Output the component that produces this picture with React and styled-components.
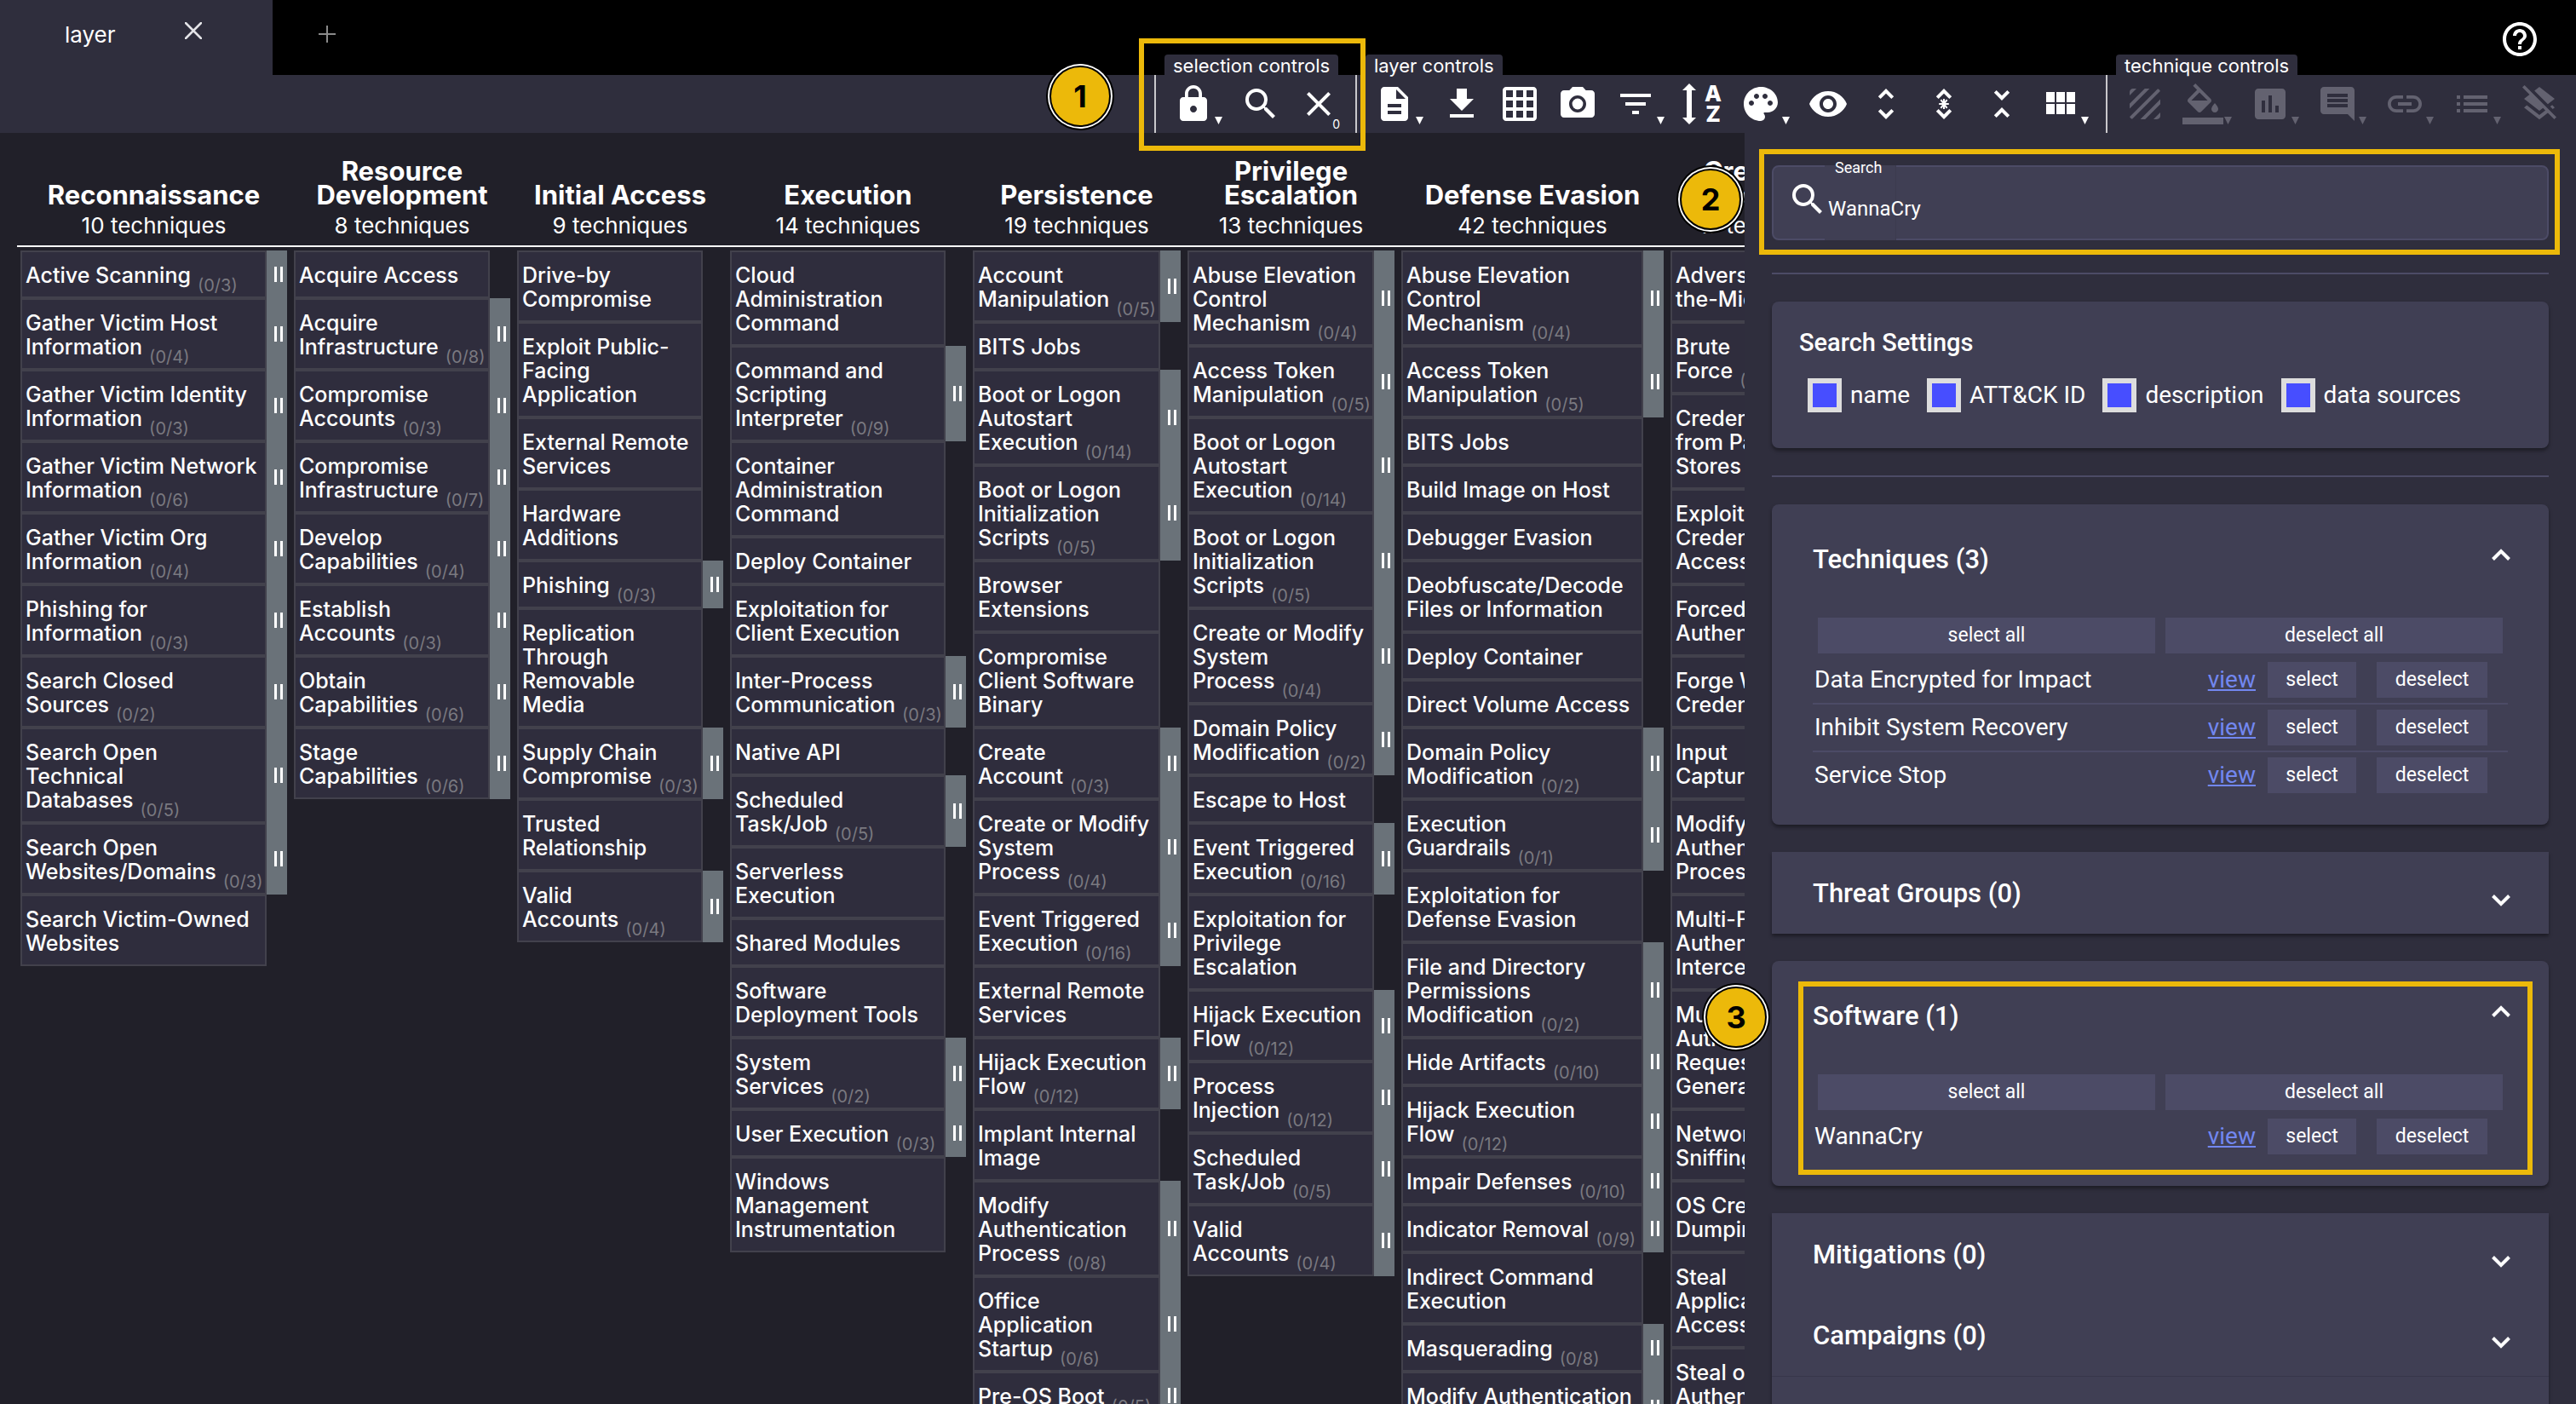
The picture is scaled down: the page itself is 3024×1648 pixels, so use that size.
import React, { useState } from 'react';
import styled, { createGlobalStyle, css } from 'styled-components';
import {
  MdLock,
  MdSearch,
  MdClose,
  MdDescription,
  MdGridOn,
  MdCameraAlt,
  MdFilterList,
  MdPalette,
  MdVisibility,
  MdUnfoldMore,
  MdUnfoldLess,
  MdTexture,
  MdAssessment,
  MdComment,
  MdLayersClear,
  MdHelpOutline,
} from 'react-icons/md';

const color = {
  black: '#000000',
  page: '#212029',
  bar: '#2f2e3d',
  cell: '#2f2d3d',
  cellBorder: '#42414c',
  handle: '#6a7279',
  card: '#403f54',
  control: '#4c4b66',
  muted: '#7a7980',
  disabled: '#636270',
  link: '#7287f0',
  mark: '#ecb90a',
  text: '#ffffff',
};

const sans = 'Inter, "Liberation Sans", sans-serif';
const roboto = 'Roboto, "Liberation Sans", sans-serif';

const GlobalStyle = createGlobalStyle`
  *, *::before, *::after { box-sizing: border-box; }
  body {
    margin: 0;
    background: ${color.page};
    color: ${color.text};
    font-family: ${sans};
  }
  button { font: inherit; color: inherit; background: none; border: 0; padding: 0; margin: 0; cursor: pointer; }
  ul { list-style: none; margin: 0; padding: 0; }
  h2, h3, p { margin: 0; }
`;

const Page = styled.div`
  display: flex;
  flex-direction: column;
  height: 100vh;
  overflow: hidden;
`;

/* ---------- tab bar ---------- */

const TabBar = styled.header`
  display: flex;
  align-items: stretch;
  height: 88px;
  flex: none;
  background: ${color.black};
`;

const Tab = styled.div`
  display: flex;
  align-items: center;
  justify-content: space-between;
  width: 320px;
  padding: 0 83px 8px 76px;
  background: ${color.bar};
  font-size: 26px;
`;

const TabButton = styled.button`
  display: flex;
  align-items: center;
  color: ${(p) => (p.$dim ? '#8a8a8a' : '#e4e4e8')};
  padding: 0 0 8px ${(p) => (p.$dim ? '54px' : '0')};
`;

const HelpButton = styled.button`
  display: flex;
  align-items: center;
  margin-left: auto;
  padding: 4px 42px 0 0;
`;

/* ---------- toolbar ---------- */

const Toolbar = styled.nav`
  display: flex;
  justify-content: flex-end;
  height: 68px;
  flex: none;
  background: ${color.bar};
`;

const Group = styled.div`
  position: relative;
  display: flex;
  align-items: stretch;
  padding: 0 9px 0 10px;
  border-left: 2px solid #c9c8cc;
`;

const GroupLabel = styled.span`
  position: absolute;
  left: 10px;
  top: -24px;
  height: 24px;
  padding: 0 10px;
  border-radius: 4px 4px 0 0;
  background: ${color.bar};
  font-size: 22px;
  line-height: 26px;
  white-space: nowrap;
`;

const ToolButton = styled.button`
  position: relative;
  display: flex;
  align-items: center;
  gap: 1px;
  width: ${(p) => (p.$menu ? '79px' : '68px')};
  padding-left: 10px;
  color: ${(p) => (p.disabled ? color.disabled : color.text)};

  > svg { flex: none; }
`;

const Caret = styled.svg`
  align-self: flex-end;
  margin-bottom: 10px;
`;

const Counter = styled.span`
  position: absolute;
  right: 9px;
  bottom: 2px;
  font-size: 14px;
  line-height: 16px;
`;

const SortIcon = styled.span`
  display: flex;
  align-items: center;
  justify-content: space-between;
  width: 46px;
  height: 48px;
`;

const SortLetters = styled.span`
  display: flex;
  flex-direction: column;
  align-items: center;
  font-size: 26px;
  font-weight: 800;
  line-height: 24px;
`;

/* ---------- call-outs ---------- */

const Outline = styled.div`
  position: absolute;
  z-index: 2;
  border: 6px solid ${color.mark};
  pointer-events: none;
  ${(p) => p.$inset && css`inset: ${p.$inset};`}
`;

const Step = styled.span`
  position: absolute;
  z-index: 3;
  left: ${(p) => p.$left};
  top: ${(p) => p.$top};
  display: flex;
  align-items: center;
  justify-content: center;
  width: 72px;
  height: 72px;
  border: 2px solid #000;
  border-radius: 50%;
  background: ${color.mark};
  box-shadow: 0 0 0 2px #fff, 0 0 0 4px #000;
  color: #000;
  font-family: ${sans};
  font-size: 36px;
  font-weight: 700;
  line-height: 40px;
`;

/* ---------- matrix ---------- */

const Body = styled.main`
  display: flex;
  flex: 1;
  min-height: 0;
`;

const Matrix = styled.section`
  display: flex;
  align-items: flex-start;
  flex: 1;
  min-width: 0;
  padding-left: 20px;
  overflow: hidden;
`;

const Column = styled.div`
  flex: none;
  width: ${(p) => p.$width}px;
`;

const ColumnHead = styled.div`
  display: flex;
  flex-direction: column;
  justify-content: flex-end;
  gap: 8px;
  height: 134px;
  padding-bottom: 9px;
  border-bottom: 2px solid #fff;
  text-align: center;
`;

const Tactic = styled.h2`
  font-size: 31px;
  font-weight: 700;
  line-height: 28px;
  white-space: pre;
`;

const Total = styled.p`
  font-size: 26px;
  line-height: 28px;
`;

const Techniques = styled.ul`
  padding: 4px 4px 0;
`;

const Technique = styled.li`
  display: flex;
`;

const Cell = styled.div`
  flex: 1;
  min-width: 0;
  margin-right: ${(p) => (p.$open ? '0' : '24px')};
  padding: 13px 0 11px 4px;
  border: 2px solid ${color.cellBorder};
  background: ${color.cell};
  font-size: 25px;
  font-weight: 500;
  line-height: 28px;
`;

const Line = styled.div`
  height: 28px;
  white-space: nowrap;
`;

const Count = styled.span`
  margin-left: 8px;
  color: ${color.muted};
  font-size: 20px;
  font-weight: 400;
  line-height: 0;
  vertical-align: -10px;
`;

const Handle = styled.button`
  display: flex;
  align-items: center;
  justify-content: center;
  width: 24px;
  padding-left: 4px;
  background: ${color.handle};
`;

/* ---------- side panel ---------- */

const Panel = styled.aside`
  display: flex;
  flex-direction: column;
  gap: 32px;
  flex: none;
  width: 976px;
  padding: 38px 32px 0;
  background: ${color.bar};
  font-family: ${roboto};

  > * { flex: none; }
`;

const SearchField = styled.div`
  position: relative;
  display: flex;
  align-items: flex-start;
  height: 88px;
  margin-bottom: 6px;
  padding: 14px 16px 0;
  border: 2px solid ${color.control};
  border-radius: 8px;
  background: ${color.card};
`;

const SearchLabel = styled.label`
  position: absolute;
  left: 60px;
  top: -2px;
  height: 88px;
  width: 84px;
  padding-left: 12px;
  border-right: 1px solid #3b3a4e;
  background: ${color.card};
  font-size: 18px;
  line-height: 6px;
`;

const SearchGlyph = styled(MdSearch)`
  position: relative;
  flex: none;
`;

const SearchInput = styled.input`
  position: relative;
  flex: 1;
  min-width: 0;
  height: 48px;
  margin-top: 11px;
  padding: 0;
  border: 0;
  outline: 0;
  background: transparent;
  color: #fff;
  font-family: ${roboto};
  font-size: 24px;
`;

const Rule = styled.hr`
  width: 100%;
  height: 2px;
  margin: 0;
  border: 0;
  background: ${color.control};
`;

const Card = styled.section`
  position: relative;
  border-radius: ${(p) => (p.$square ? '0' : '8px')};
  background: ${color.card};
  box-shadow: 0 3px 4px rgba(0, 0, 0, 0.4);
`;

const Settings = styled(Card)`
  display: flex;
  flex-direction: column;
  gap: 16px;
  height: 172px;
  padding: 30px 32px 0;
`;

const SettingsTitle = styled.h3`
  font-size: 29px;
  font-weight: 500;
  line-height: 36px;
`;

const CheckRow = styled.div`
  display: flex;
  align-items: center;
  gap: 20px;
  padding: 8px 0 0 10px;
`;

const CheckLabel = styled.label`
  display: flex;
  align-items: center;
  gap: 10px;
  font-size: 28px;
  line-height: 40px;
`;

const Check = styled.input`
  appearance: none;
  width: 40px;
  height: 40px;
  margin: 0;
  border: 6px solid #dddddd;
  background: transparent;

  &:checked { background: #474eff; }
`;

const SectionToggle = styled.button`
  display: flex;
  align-items: center;
  justify-content: space-between;
  width: 100%;
  height: ${(p) => (p.$open ? '128px' : '96px')};
  padding: 1px 45px 0 48px;
  border-bottom: ${(p) => (p.$line ? '1px solid #37364a' : '0')};
  font-size: 31px;
  font-weight: 500;
  line-height: 40px;
  text-align: left;
`;

const Chevron = styled.svg`
  margin: ${(p) => (p.$open ? '0 0 12px' : '16px 0 0')};
  transform: ${(p) => (p.$open ? 'none' : 'rotate(180deg)')};
`;

const SectionBody = styled.div`
  padding: 5px 48px 29px;
`;

const BulkRow = styled.div`
  display: grid;
  grid-template-columns: 1fr 1fr;
  gap: 12px;
  padding: 0 6px 4px;
`;

const Button = styled.button`
  height: 42px;
  background: ${color.control};
  font-size: 23px;
  line-height: 42px;
`;

const Result = styled.li`
  display: grid;
  grid-template-columns: 1fr auto 104px 130px;
  align-items: center;
  height: 56px;
  padding: 0 24px 0 2px;
  border-bottom: 2px solid ${color.control};
  font-size: 28px;
  line-height: 36px;

  &:last-child { border-bottom-color: transparent; }
`;

const ViewLink = styled.a`
  margin-right: 14px;
  color: ${color.link};
  text-decoration: underline;
`;

const SelectButton = styled(Button)`
  margin-right: 24px;
`;

const RowResult = styled(Result)`
  grid-template-columns: 1fr auto 128px 130px;
`;

/* ---------- data ---------- */

// Each technique is "name" or "name|sub-technique count"; \n marks a line end.
const columns = [
  {
    name: 'Reconnaissance', total: 10, width: 321,
    items: ['Active Scanning|3', 'Gather Victim Host\nInformation|4', 'Gather Victim Identity\nInformation|3', 'Gather Victim Network\nInformation|6', 'Gather Victim Org\nInformation|4', 'Phishing for\nInformation|3', 'Search Closed\nSources|2', 'Search Open\nTechnical\nDatabases|5', 'Search Open\nWebsites/Domains|3', 'Search Victim-Owned\nWebsites'],
  },
  {
    name: 'Resource\nDevelopment', total: 8, width: 262,
    items: ['Acquire Access', 'Acquire\nInfrastructure|8', 'Compromise\nAccounts|3', 'Compromise\nInfrastructure|7', 'Develop\nCapabilities|4', 'Establish\nAccounts|3', 'Obtain\nCapabilities|6', 'Stage\nCapabilities|6'],
  },
  {
    name: 'Initial Access', total: 9, width: 250,
    items: ['Drive-by\nCompromise', 'Exploit Public-\nFacing\nApplication', 'External Remote\nServices', 'Hardware\nAdditions', 'Phishing|3', 'Replication\nThrough\nRemovable\nMedia', 'Supply Chain\nCompromise|3', 'Trusted\nRelationship', 'Valid\nAccounts|4'],
  },
  {
    name: 'Execution', total: 14, width: 285,
    items: ['Cloud\nAdministration\nCommand', 'Command and\nScripting\nInterpreter|9', 'Container\nAdministration\nCommand', 'Deploy Container', 'Exploitation for\nClient Execution', 'Inter-Process\nCommunication|3', 'Native API', 'Scheduled\nTask/Job|5', 'Serverless\nExecution', 'Shared Modules', 'Software\nDeployment Tools', 'System\nServices|2', 'User Execution|3', 'Windows\nManagement\nInstrumentation'],
  },
  {
    name: 'Persistence', total: 19, width: 252,
    items: ['Account\nManipulation|5', 'BITS Jobs', 'Boot or Logon\nAutostart\nExecution|14', 'Boot or Logon\nInitialization\nScripts|5', 'Browser\nExtensions', 'Compromise\nClient Software\nBinary', 'Create\nAccount|3', 'Create or Modify\nSystem\nProcess|4', 'Event Triggered\nExecution|16', 'External Remote\nServices', 'Hijack Execution\nFlow|12', 'Implant Internal\nImage', 'Modify\nAuthentication\nProcess|8', 'Office\nApplication\nStartup|6', 'Pre-OS Boot|5'],
  },
  {
    name: 'Privilege\nEscalation', total: 13, width: 251,
    items: ['Abuse Elevation\nControl\nMechanism|4', 'Access Token\nManipulation|5', 'Boot or Logon\nAutostart\nExecution|14', 'Boot or Logon\nInitialization\nScripts|5', 'Create or Modify\nSystem\nProcess|4', 'Domain Policy\nModification|2', 'Escape to Host', 'Event Triggered\nExecution|16', 'Exploitation for\nPrivilege\nEscalation', 'Hijack Execution\nFlow|12', 'Process\nInjection|12', 'Scheduled\nTask/Job|5', 'Valid\nAccounts|4'],
  },
  {
    name: 'Defense Evasion', total: 42, width: 316,
    items: ['Abuse Elevation\nControl\nMechanism|4', 'Access Token\nManipulation|5', 'BITS Jobs', 'Build Image on Host', 'Debugger Evasion', 'Deobfuscate/Decode\nFiles or Information', 'Deploy Container', 'Direct Volume Access', 'Domain Policy\nModification|2', 'Execution\nGuardrails|1', 'Exploitation for\nDefense Evasion', 'File and Directory\nPermissions\nModification|2', 'Hide Artifacts|10', 'Hijack Execution\nFlow|12', 'Impair Defenses|10', 'Indicator Removal|9', 'Indirect Command\nExecution', 'Masquerading|8', 'Modify Authentication\nProcess|8'],
  },
  {
    name: 'Credential\nAccess', total: 17, width: 242,
    items: ['Adversary-in-\nthe-Middle', 'Brute\nForce|4', 'Credentials\nfrom Password\nStores|5', 'Exploitation for\nCredential\nAccess', 'Forced\nAuthentication', 'Forge Web\nCredentials|2', 'Input\nCapture|4', 'Modify\nAuthentication\nProcess|8', 'Multi-Factor\nAuthentication\nInterception', 'Multi-Factor\nAuthentication\nRequest\nGeneration', 'Network\nSniffing', 'OS Credential\nDumping|8', 'Steal\nApplication\nAccess Token', 'Steal or Forge\nAuthentication\nCertificates'],
  },
];

/* ---------- icons ---------- */

const Glyph = ({ children }) => (
  <svg width="48" height="48" viewBox="0 0 24 24" fill="currentColor" aria-hidden="true">{children}</svg>
);

const DownloadIcon = () => <Glyph><path d="M19 9h-4V3H9v6H5l7 7 7-7zM5 18v2h14v-2H5z" /></Glyph>;

const ModuleIcon = () => (
  <Glyph><path d="M4 11h5V5H4v6zm0 7h5v-6H4v6zm6 0h5v-6h-5v6zm6 0h5v-6h-5v6zm-6-7h5V5h-5v6zm6-6v6h5V5h-5z" /></Glyph>
);

const FillIcon = () => (
  <Glyph>
    <path d="M16.56 8.94L7.62 0 6.21 1.41l2.38 2.38-5.15 5.15c-.59.59-.59 1.54 0 2.12l5.5 5.5c.29.29.68.44 1.06.44s.77-.15 1.06-.44l5.5-5.5c.59-.58.59-1.53 0-2.12zM5.21 10L10 5.21 14.79 10H5.21zM19 11.5s-2 2.17-2 3.5c0 1.1.9 2 2 2s2-.9 2-2c0-1.33-2-3.5-2-3.5z" />
    <path d="M0 20h24v4H0z" />
  </Glyph>
);

const LinkIcon = () => (
  <Glyph><path d="M3.9 12c0-1.71 1.39-3.1 3.1-3.1h4V7H7c-2.76 0-5 2.24-5 5s2.24 5 5 5h4v-1.9H7c-1.71 0-3.1-1.39-3.1-3.1zM8 13h8v-2H8v2zm9-6h-4v1.9h4c1.71 0 3.1 1.39 3.1 3.1s-1.39 3.1-3.1 3.1h-4V17h4c2.76 0 5-2.24 5-5s-2.24-5-5-5z" /></Glyph>
);

const ListIcon = () => (
  <Glyph><path d="M3 13h2v-2H3v2zm0 4h2v-2H3v2zm0-8h2V7H3v2zm4 4h14v-2H7v2zm0 4h14v-2H7v2zM7 7v2h14V7H7z" /></Glyph>
);

const UnfoldAnnotatedIcon = () => (
  <Glyph>
    <path d="M12 5.83L15.17 9l1.41-1.41L12 3 7.41 7.59 8.83 9 12 5.83zm0 12.34L8.83 15l-1.41 1.41L12 21l4.59-4.59L15.17 15 12 18.17z" />
    <path d="M12 9v6M9.1 12h5.8M10.2 9.6l3.6 4.8M13.8 9.6l-3.6 4.8" stroke="currentColor" strokeWidth="1" />
  </Glyph>
);

const SortAlphaIcon = () => (
  <SortIcon>
    <svg width="16" height="48" viewBox="0 0 16 48" fill="currentColor" aria-hidden="true">
      <path d="M8 0l8 8h-5v32h5l-8 8-8-8h5V8H0z" />
    </svg>
    <SortLetters><span>A</span><span>Z</span></SortLetters>
  </SortIcon>
);

const MenuCaret = () => (
  <Caret width="9" height="9" viewBox="0 0 9 9" fill="currentColor" aria-hidden="true"><path d="M0 0h9L4.500 9z" /></Caret>
);

const CloseIcon = () => (
  <svg width="20" height="20" viewBox="0 0 20 20" stroke="currentColor" strokeWidth="2.500" strokeLinecap="round" aria-hidden="true"><path d="M1 1l18 18M19 1L1 19" /></svg>
);

const PlusIcon = () => (
  <svg width="20" height="20" viewBox="0 0 20 20" stroke="currentColor" strokeWidth="2" aria-hidden="true"><path d="M10 0v20M0 10h20" /></svg>
);

/* ---------- parts ---------- */

const Tool = ({ label, icon, menu, disabled, children }) => (
  <ToolButton type="button" aria-label={label} $menu={menu} disabled={disabled}>
    {icon}
    {menu && <MenuCaret />}
    {children}
  </ToolButton>
);

const TechniqueItem = ({ item }) => {
  const [name, count] = item.split('|');
  const lines = name.split('\n');
  return (
    <Technique>
      <Cell $open={Boolean(count)}>
        {lines.map((line, i) => (
          <Line key={line}>
            <span>{line}</span>
            {count && i === lines.length - 1 && <Count>(0/{count})</Count>}
          </Line>
        ))}
      </Cell>
      {count && (
        <Handle type="button" aria-label={`expand ${lines.join(' ')}`}>
          <svg width="10" height="18" viewBox="0 0 10 18" fill="#fff" aria-hidden="true"><path d="M0 0h3v18H0zM7 0h3v18H7z" /></svg>
        </Handle>
      )}
    </Technique>
  );
};

const SectionHeader = ({ title, open, line }) => (
  <SectionToggle type="button" aria-expanded={Boolean(open)} $open={open} $line={line}>
    {title}
    <Chevron $open={open} width="22" height="14" viewBox="0 0 22 14" fill="none" stroke="#fff" strokeWidth="4" aria-hidden="true">
      <path d="M1.500 12.500L11 3l9.500 9.500" />
    </Chevron>
  </SectionToggle>
);

const ResultList = ({ items }) => (
  <SectionBody>
    <BulkRow>
      <Button type="button">select all</Button>
      <Button type="button">deselect all</Button>
    </BulkRow>
    <ul>
      {items.map((name) => (
        <RowResult key={name}>
          <span>{name}</span>
          <ViewLink href="#view">view</ViewLink>
          <SelectButton type="button">select</SelectButton>
          <Button type="button">deselect</Button>
        </RowResult>
      ))}
    </ul>
  </SectionBody>
);

const settings = ['name', 'ATT&CK ID', 'description', 'data sources'];

export default function App() {
  const [query, setQuery] = useState('WannaCry');

  return (
    <Page>
      <GlobalStyle />
      <TabBar>
        <Tab>
          <span>layer</span>
          <TabButton type="button" aria-label="close layer"><CloseIcon /></TabButton>
        </Tab>
        <TabButton type="button" aria-label="new tab" $dim><PlusIcon /></TabButton>
        <HelpButton type="button" aria-label="help"><MdHelpOutline size={48} /></HelpButton>
      </TabBar>

      <Toolbar>
        <Group>
          <GroupLabel>selection controls</GroupLabel>
          <Tool label="lock selection" menu icon={<MdLock size={48} />} />
          <Tool label="search" icon={<MdSearch size={48} />} />
          <Tool label="deselect" icon={<MdClose size={48} />}><Counter>0</Counter></Tool>
          <Outline $inset="-43px -12px -21px -20px" />
          <Step $left="-125px" $top="-11px">1</Step>
        </Group>
        <Group>
          <GroupLabel>layer controls</GroupLabel>
          <Tool label="layer information" menu icon={<MdDescription size={48} />} />
          <Tool label="download" icon={<DownloadIcon />} />
          <Tool label="export to spreadsheet" icon={<MdGridOn size={48} />} />
          <Tool label="render image" icon={<MdCameraAlt size={48} />} />
          <Tool label="filters" menu icon={<MdFilterList size={48} />} />
          <Tool label="sorting" icon={<SortAlphaIcon />} />
          <Tool label="color setup" menu icon={<MdPalette size={48} />} />
          <Tool label="show or hide disabled" icon={<MdVisibility size={48} />} />
          <Tool label="expand all" icon={<MdUnfoldMore size={48} />} />
          <Tool label="expand annotated" icon={<UnfoldAnnotatedIcon />} />
          <Tool label="collapse all" icon={<MdUnfoldLess size={48} />} />
          <Tool label="layout" menu icon={<ModuleIcon />} />
        </Group>
        <Group>
          <GroupLabel>technique controls</GroupLabel>
          <Tool label="toggle state" disabled icon={<MdTexture size={48} />} />
          <Tool label="background color" menu disabled icon={<FillIcon />} />
          <Tool label="score" menu disabled icon={<MdAssessment size={48} />} />
          <Tool label="comment" menu disabled icon={<MdComment size={48} />} />
          <Tool label="link" menu disabled icon={<LinkIcon />} />
          <Tool label="metadata" menu disabled icon={<ListIcon />} />
          <Tool label="clear annotations" disabled icon={<MdLayersClear size={48} />} />
        </Group>
      </Toolbar>

      <Body>
        <Matrix>
          {columns.map((c) => (
            <Column key={c.name} $width={c.width}>
              <ColumnHead>
                <Tactic>{c.name}</Tactic>
                <Total>{c.total} techniques</Total>
              </ColumnHead>
              <Techniques>
                {c.items.map((item) => <TechniqueItem key={item} item={item} />)}
              </Techniques>
            </Column>
          ))}
        </Matrix>

        <Panel>
          <SearchField>
            <SearchLabel htmlFor="query">Search</SearchLabel>
            <SearchGlyph size={48} />
            <SearchInput id="query" value={query} onChange={(e) => setQuery(e.target.value)} />
            <Outline $inset="-21px -15px -19px -17px" />
            <Step $left="-110px" $top="2px">2</Step>
          </SearchField>

          <Rule />

          <Settings>
            <SettingsTitle>Search Settings</SettingsTitle>
            <CheckRow>
              {settings.map((s) => (
                <CheckLabel key={s}>
                  <Check type="checkbox" defaultChecked />
                  {s}
                </CheckLabel>
              ))}
            </CheckRow>
          </Settings>

          <Rule />

          <Card>
            <SectionHeader title="Techniques (3)" open />
            <ResultList items={['Data Encrypted for Impact', 'Inhibit System Recovery', 'Service Stop']} />
          </Card>

          <Card $square>
            <SectionHeader title="Threat Groups (0)" />
          </Card>

          <Card>
            <SectionHeader title="Software (1)" open />
            <ResultList items={['WannaCry']} />
            <Outline $inset="24px 19px 13px 31px" />
            <Step $left="-78px" $top="30px">3</Step>
          </Card>

          <Card $square>
            <SectionHeader title="Mitigations (0)" />
            <SectionHeader title="Campaigns (0)" line />
            <SectionHeader />
          </Card>
        </Panel>
      </Body>
    </Page>
  );
}
